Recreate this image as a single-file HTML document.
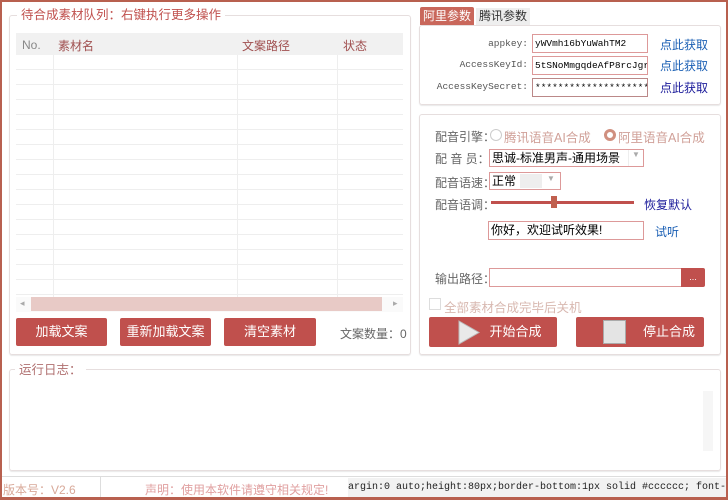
<!DOCTYPE html>
<html><head><meta charset="utf-8"><style>
*{margin:0;padding:0;box-sizing:border-box}
body{width:728px;height:500px;overflow:hidden;background:#fff;font-family:"Liberation Sans","Microsoft YaHei","Noto Sans CJK SC",sans-serif;font-size:12px;position:relative}
.a{position:absolute}
.win{left:0;top:0;width:728px;height:500px;border:2px solid #b8604f;border-bottom:3px solid #b8604f}
.grp{border:1px solid #e6dede;border-radius:3px;box-shadow:0 1px 1px #e8e8e8}
.ttl{background:#fff;color:#c0504d;font-size:12.5px;padding:0 4px;line-height:14px}
.btn{background:#c0504d;color:#fff;border-radius:2px;text-align:center;line-height:28px;font-size:13px}
.hl{height:1px;background:#eee;left:16px;width:387px}
.vl{width:1px;background:#eee;top:55px;height:242px}
.lbl{font-family:"Liberation Mono",monospace;font-size:9.5px;color:#555;text-align:right;width:110px;left:418px}
.inp{border:1px solid #d99;background:#fff;font-family:"Liberation Mono",monospace;font-size:9.5px;height:19px;line-height:17px;padding-left:2px;overflow:hidden;white-space:nowrap}
.lnk{color:#1a5fb4;font-size:12px}
.g{color:#666;font-size:12px}
.sel{border:1px solid #d99;background:#fff;height:18px;line-height:16px;padding-left:2px;color:#000}
</style></head><body>
<div class="a win"></div>

<div class="a grp" style="left:9px;top:15px;width:402px;height:340px"></div>
<div class="a ttl" style="left:17px;top:8px">待合成素材队列：右键执行更多操作</div>
<div class="a" style="left:16px;top:33px;width:387px;height:22px;background:#f1f1f1"></div>
<div class="a" style="left:22px;top:38px;color:#888">No.</div>
<div class="a" style="left:58px;top:37px;color:#a05050">素材名</div>
<div class="a" style="left:242px;top:37px;color:#a05050">文案路径</div>
<div class="a" style="left:343px;top:37px;color:#a05050">状态</div>
<div class="a vl" style="left:53px"></div>
<div class="a vl" style="left:237px"></div>
<div class="a vl" style="left:337px"></div>
<div class="a hl" style="top:69px"></div><div class="a hl" style="top:84px"></div><div class="a hl" style="top:99px"></div><div class="a hl" style="top:114px"></div><div class="a hl" style="top:129px"></div><div class="a hl" style="top:144px"></div><div class="a hl" style="top:159px"></div><div class="a hl" style="top:174px"></div><div class="a hl" style="top:189px"></div><div class="a hl" style="top:204px"></div><div class="a hl" style="top:219px"></div><div class="a hl" style="top:234px"></div><div class="a hl" style="top:249px"></div><div class="a hl" style="top:264px"></div><div class="a hl" style="top:279px"></div><div class="a hl" style="top:294px"></div>
<div class="a" style="left:16px;top:297px;width:387px;height:15px;background:#fafafa"></div>
<div class="a" style="left:31px;top:297px;width:351px;height:14px;background:#e8cac6"></div>
<div class="a" style="left:20px;top:298px;color:#aaa;font-size:9px">◂</div>
<div class="a" style="left:393px;top:298px;color:#aaa;font-size:9px">▸</div>
<div class="a btn" style="left:16px;top:318px;width:91px;height:28px">加载文案</div>
<div class="a btn" style="left:120px;top:318px;width:91px;height:28px">重新加载文案</div>
<div class="a btn" style="left:224px;top:318px;width:92px;height:28px">清空素材</div>
<div class="a" style="left:340px;top:325px;color:#666">文案数量：0</div>

<div class="a" style="left:420px;top:7px;width:54px;height:18px;background:#c9675b;color:#fff;font-size:12px;line-height:18px;text-align:center;border-radius:2px 2px 0 0">阿里参数</div>
<div class="a" style="left:476px;top:8px;width:54px;height:17px;background:#eee;color:#333;font-size:12px;line-height:17px;text-align:center">腾讯参数</div>
<div class="a grp" style="left:419px;top:25px;width:302px;height:80px"></div>
<div class="a lbl" style="top:38px">appkey:</div>
<div class="a lbl" style="top:59px">AccessKeyId:</div>
<div class="a lbl" style="top:81px">AccessKeySecret:</div>
<div class="a inp" style="left:532px;top:34px;width:116px">yWVmh16bYuWahTM2</div>
<div class="a inp" style="left:532px;top:56px;width:116px">5tSNoMmgqdeAfP8rcJgr</div>
<div class="a inp" style="left:532px;top:78px;width:116px;border-color:#b88">*********************</div>
<div class="a lnk" style="left:660px;top:36px">点此获取</div>
<div class="a lnk" style="left:660px;top:57px">点此获取</div>
<div class="a lnk" style="left:660px;top:79px;color:#1a1a9a">点此获取</div>

<div class="a grp" style="left:419px;top:114px;width:302px;height:241px"></div>
<div class="a g" style="left:435px;top:128px">配音引擎：</div>
<div class="a" style="left:490px;top:129px;width:12px;height:12px;border:1px solid #ccc;border-radius:50%"></div>
<div class="a" style="left:504px;top:127px;color:#d0a098;font-size:12.5px">腾讯语音AI合成</div>
<div class="a" style="left:604px;top:129px;width:12px;height:12px;border:3px solid #d09080;border-radius:50%"></div>
<div class="a" style="left:618px;top:127px;color:#d0a098;font-size:12.5px">阿里语音AI合成</div>
<div class="a g" style="left:435px;top:150px">配 音 员：</div>
<div class="a sel" style="left:489px;top:149px;width:155px">思诚-标准男声-通用场景</div>
<div class="a" style="left:628px;top:150px;width:1px;height:16px;background:#eee"></div>
<div class="a" style="left:632px;top:150px;color:#aaa;font-size:8px">▼</div>
<div class="a g" style="left:435px;top:174px">配音语速：</div>
<div class="a sel" style="left:489px;top:172px;width:72px">正常</div>
<div class="a" style="left:520px;top:174px;width:22px;height:14px;background:#eee"></div>
<div class="a" style="left:547px;top:174px;color:#aaa;font-size:8px">▼</div>
<div class="a g" style="left:435px;top:196px">配音语调：</div>
<div class="a" style="left:491px;top:201px;width:143px;height:3px;background:#c0504d"></div>
<div class="a" style="left:551px;top:196px;width:6px;height:12px;background:#c0604f"></div>
<div class="a" style="left:644px;top:196px;color:#1a1a9a">恢复默认</div>
<div class="a sel" style="left:488px;top:221px;width:156px;height:19px;line-height:17px">你好，欢迎试听效果!</div>
<div class="a lnk" style="left:655px;top:223px">试听</div>
<div class="a g" style="left:435px;top:270px">输出路径：</div>
<div class="a sel" style="left:489px;top:268px;width:200px;height:19px"></div>
<div class="a" style="left:681px;top:268px;width:24px;height:19px;background:#c0504d;color:#fff;font-size:9px;text-align:center;line-height:19px;border-radius:0 2px 2px 0">...</div>
<div class="a" style="left:429px;top:298px;width:12px;height:12px;border:1px solid #ddd"></div>
<div class="a" style="left:444px;top:297px;color:#d8b8b0;font-size:12.5px">全部素材合成完毕后关机</div>
<div class="a btn" style="left:429px;top:317px;width:128px;height:30px;line-height:30px;padding-left:45px">开始合成</div>
<svg class="a" style="left:457px;top:320px" width="24" height="25"><polygon points="2,1 22,12.5 2,24" fill="#e9e9e9" stroke="#bbb"/></svg>
<div class="a btn" style="left:576px;top:317px;width:128px;height:30px;line-height:30px;padding-left:58px">停止合成</div>
<div class="a" style="left:603px;top:320px;width:23px;height:24px;background:#e4e4e4;border:1px solid #aaa"></div>

<div class="a grp" style="left:9px;top:369px;width:712px;height:102px"></div>
<div class="a ttl" style="left:15px;top:363px;color:#b07070">运行日志：</div>
<div class="a" style="left:703px;top:391px;width:10px;height:60px;background:#f6f6f6"></div>

<div class="a" style="left:2px;top:476px;width:724px;height:1px;background:#ddd"></div>
<div class="a" style="left:3px;top:481px;color:#d8a898;font-size:12px">版本号：V2.6</div>
<div class="a" style="left:100px;top:477px;width:1px;height:20px;background:#ddd"></div>
<div class="a" style="left:145px;top:481px;color:#e0a0a0;font-size:12px">声明：使用本软件请遵守相关规定!</div>
<div class="a" style="left:348px;top:478px;width:378px;height:19px;background:#f2f2f2;font-family:'Liberation Mono',monospace;font-size:10px;line-height:19px;white-space:nowrap;overflow:hidden;color:#222">argin:0 auto;height:80px;border-bottom:1px solid #cccccc; font-family</div>
</body></html>
